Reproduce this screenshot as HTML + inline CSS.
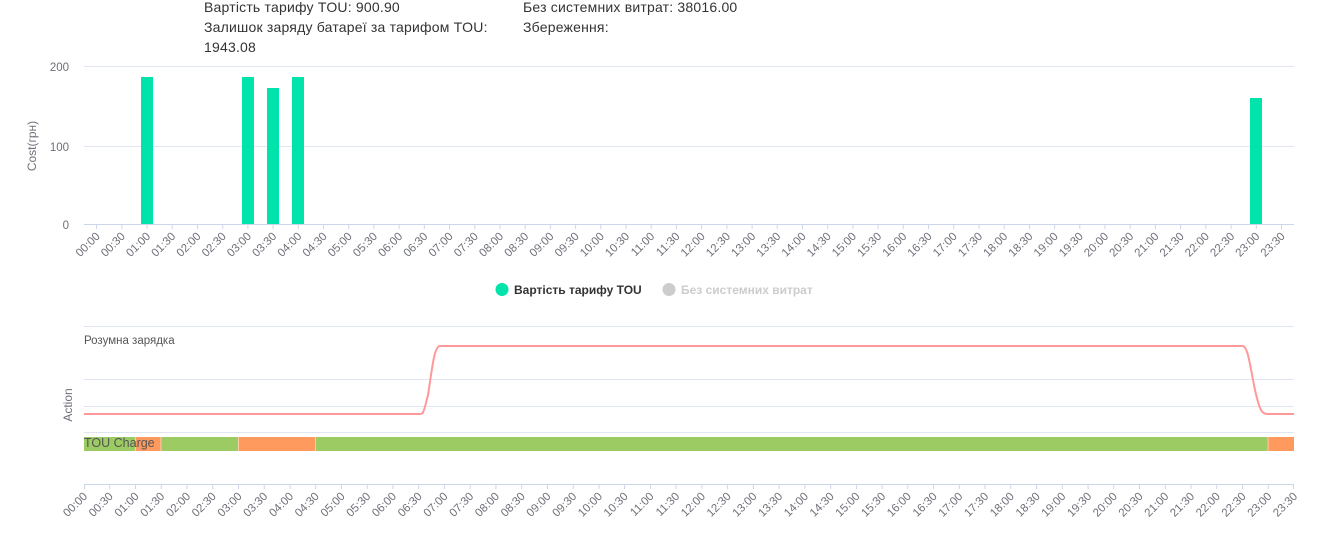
<!DOCTYPE html>
<html><head><meta charset="utf-8"><style>
body{margin:0;width:1341px;height:534px;overflow:hidden;background:#fff;font-family:"Liberation Sans","DejaVu Sans",sans-serif;}
.t{position:absolute;font-size:14px;line-height:20px;color:#333;letter-spacing:0.2px;}
svg{position:absolute;left:0;top:0;}
.tl text{font-size:11.5px;fill:#6e7079;text-anchor:end;}
</style></head><body>
<div class="t" style="left:204px;top:-3px;width:300px;">Вартість тарифу TOU: 900.90<br>Залишок заряду батареї за тарифом TOU:<br>1943.08</div>
<div class="t" style="left:523px;top:-3px;">Без системних витрат: 38016.00<br>Збереження:</div>
<svg width="1341" height="534" xmlns="http://www.w3.org/2000/svg">
<g stroke="#e0e6f1" stroke-width="1">
<line x1="84" y1="66.5" x2="1294" y2="66.5"/><line x1="84" y1="146.5" x2="1294" y2="146.5"/>
<line x1="84" y1="326.5" x2="1294" y2="326.5"/><line x1="84" y1="379.5" x2="1294" y2="379.5"/><line x1="84" y1="406.5" x2="1294" y2="406.5"/><line x1="84" y1="432.5" x2="1294" y2="432.5"/>
</g>
<g font-size="11.5" fill="#6e7079" text-anchor="end">
<text x="69" y="71">200</text><text x="69" y="151">100</text><text x="69" y="229">0</text>
</g>
<text transform="translate(36,146) rotate(-90)" font-size="12" fill="#6e7079" text-anchor="middle">Cost(грн)</text>
<text transform="translate(72,405) rotate(-90)" font-size="12" fill="#6e7079" text-anchor="middle">Action</text>
<g fill="#00e4ac">
<rect x="141" y="77" width="12" height="147"/><rect x="242" y="77" width="12" height="147"/><rect x="267" y="88" width="12" height="136"/><rect x="292" y="77" width="12" height="147"/><rect x="1250" y="98" width="12" height="126"/>
</g>
<line x1="84" y1="224.5" x2="1294" y2="224.5" stroke="#ccd6eb"/>
<g stroke="#ccd6eb">
<path d="M96.6 224v5M121.8 224v5M147 224v5M172.2 224v5M197.4 224v5M222.7 224v5M247.9 224v5M273.1 224v5M298.3 224v5M323.5 224v5M348.7 224v5M373.9 224v5M399.1 224v5M424.3 224v5M449.5 224v5M474.8 224v5M500 224v5M525.2 224v5M550.4 224v5M575.6 224v5M600.8 224v5M626 224v5M651.2 224v5M676.4 224v5M701.6 224v5M726.9 224v5M752.1 224v5M777.3 224v5M802.5 224v5M827.7 224v5M852.9 224v5M878.1 224v5M903.3 224v5M928.5 224v5M953.7 224v5M979 224v5M1004.2 224v5M1029.4 224v5M1054.6 224v5M1079.8 224v5M1105 224v5M1130.2 224v5M1155.4 224v5M1180.6 224v5M1205.8 224v5M1231.1 224v5M1256.3 224v5M1281.5 224v5"/>
</g>
<g class="tl">
<text transform="translate(100.6,237) rotate(-45)">00:00</text><text transform="translate(125.8,237) rotate(-45)">00:30</text><text transform="translate(151,237) rotate(-45)">01:00</text><text transform="translate(176.2,237) rotate(-45)">01:30</text><text transform="translate(201.4,237) rotate(-45)">02:00</text><text transform="translate(226.7,237) rotate(-45)">02:30</text><text transform="translate(251.9,237) rotate(-45)">03:00</text><text transform="translate(277.1,237) rotate(-45)">03:30</text><text transform="translate(302.3,237) rotate(-45)">04:00</text><text transform="translate(327.5,237) rotate(-45)">04:30</text><text transform="translate(352.7,237) rotate(-45)">05:00</text><text transform="translate(377.9,237) rotate(-45)">05:30</text><text transform="translate(403.1,237) rotate(-45)">06:00</text><text transform="translate(428.3,237) rotate(-45)">06:30</text><text transform="translate(453.5,237) rotate(-45)">07:00</text><text transform="translate(478.8,237) rotate(-45)">07:30</text><text transform="translate(504,237) rotate(-45)">08:00</text><text transform="translate(529.2,237) rotate(-45)">08:30</text><text transform="translate(554.4,237) rotate(-45)">09:00</text><text transform="translate(579.6,237) rotate(-45)">09:30</text><text transform="translate(604.8,237) rotate(-45)">10:00</text><text transform="translate(630,237) rotate(-45)">10:30</text><text transform="translate(655.2,237) rotate(-45)">11:00</text><text transform="translate(680.4,237) rotate(-45)">11:30</text><text transform="translate(705.6,237) rotate(-45)">12:00</text><text transform="translate(730.9,237) rotate(-45)">12:30</text><text transform="translate(756.1,237) rotate(-45)">13:00</text><text transform="translate(781.3,237) rotate(-45)">13:30</text><text transform="translate(806.5,237) rotate(-45)">14:00</text><text transform="translate(831.7,237) rotate(-45)">14:30</text><text transform="translate(856.9,237) rotate(-45)">15:00</text><text transform="translate(882.1,237) rotate(-45)">15:30</text><text transform="translate(907.3,237) rotate(-45)">16:00</text><text transform="translate(932.5,237) rotate(-45)">16:30</text><text transform="translate(957.7,237) rotate(-45)">17:00</text><text transform="translate(983,237) rotate(-45)">17:30</text><text transform="translate(1008.2,237) rotate(-45)">18:00</text><text transform="translate(1033.4,237) rotate(-45)">18:30</text><text transform="translate(1058.6,237) rotate(-45)">19:00</text><text transform="translate(1083.8,237) rotate(-45)">19:30</text><text transform="translate(1109,237) rotate(-45)">20:00</text><text transform="translate(1134.2,237) rotate(-45)">20:30</text><text transform="translate(1159.4,237) rotate(-45)">21:00</text><text transform="translate(1184.6,237) rotate(-45)">21:30</text><text transform="translate(1209.8,237) rotate(-45)">22:00</text><text transform="translate(1235.1,237) rotate(-45)">22:30</text><text transform="translate(1260.3,237) rotate(-45)">23:00</text><text transform="translate(1285.5,237) rotate(-45)">23:30</text>
</g>
<circle cx="502" cy="289.5" r="6.5" fill="#00e4ac"/>
<text x="514" y="294" font-size="12" font-weight="bold" fill="#333">Вартість тарифу TOU</text>
<circle cx="669" cy="289.5" r="6.5" fill="#ccc"/>
<text x="681" y="294" font-size="12" font-weight="bold" fill="#ccc">Без системних витрат</text>
<text x="84" y="344" font-size="11.5" fill="#555">Розумна зарядка</text>
<path d="M84 414H418.7C424 414 423 414 428 395C432 370 434 346 440 346H1242.5C1248 346 1250 366 1255 390C1260 412 1262 414 1268.3 414H1294" fill="none" stroke="#ff9999" stroke-width="2"/>
<g>
<rect x="84" y="437" width="51" height="14" fill="#9ccb63"/>
<rect x="135.5" y="437" width="25.2" height="14" fill="#ff9a5e"/>
<rect x="161.2" y="437" width="76.8" height="14" fill="#9ccb63"/>
<rect x="238.5" y="437" width="76.7" height="14" fill="#ff9a5e"/>
<rect x="315.7" y="437" width="952.1" height="14" fill="#9ccb63"/>
<rect x="1268.3" y="437" width="25.7" height="14" fill="#ff9a5e"/>
</g>
<text x="84" y="447" font-size="12.5" fill="#555">TOU Charge</text>
<line x1="84" y1="484.5" x2="1294" y2="484.5" stroke="#ccd6eb"/>
<g stroke="#ccd6eb">
<path d="M84.5 484v5M109.7 484v5M135.5 484v5M161.2 484v5M187 484v5M212.7 484v5M238.5 484v5M264.2 484v5M290 484v5M315.7 484v5M341.5 484v5M367.2 484v5M392.9 484v5M418.7 484v5M444.4 484v5M470.2 484v5M495.9 484v5M521.7 484v5M547.4 484v5M573.2 484v5M598.9 484v5M624.6 484v5M650.4 484v5M676.1 484v5M701.9 484v5M727.6 484v5M753.4 484v5M779.1 484v5M804.9 484v5M830.6 484v5M856.4 484v5M882.1 484v5M907.8 484v5M933.6 484v5M959.3 484v5M985.1 484v5M1010.8 484v5M1036.6 484v5M1062.3 484v5M1088.1 484v5M1113.8 484v5M1139.5 484v5M1165.3 484v5M1191 484v5M1216.8 484v5M1242.5 484v5M1268.3 484v5M1293.5 484v5"/>
</g>
<g class="tl">
<text transform="translate(88,497) rotate(-45)">00:00</text><text transform="translate(113.7,497) rotate(-45)">00:30</text><text transform="translate(139.5,497) rotate(-45)">01:00</text><text transform="translate(165.2,497) rotate(-45)">01:30</text><text transform="translate(191,497) rotate(-45)">02:00</text><text transform="translate(216.7,497) rotate(-45)">02:30</text><text transform="translate(242.5,497) rotate(-45)">03:00</text><text transform="translate(268.2,497) rotate(-45)">03:30</text><text transform="translate(294,497) rotate(-45)">04:00</text><text transform="translate(319.7,497) rotate(-45)">04:30</text><text transform="translate(345.5,497) rotate(-45)">05:00</text><text transform="translate(371.2,497) rotate(-45)">05:30</text><text transform="translate(396.9,497) rotate(-45)">06:00</text><text transform="translate(422.7,497) rotate(-45)">06:30</text><text transform="translate(448.4,497) rotate(-45)">07:00</text><text transform="translate(474.2,497) rotate(-45)">07:30</text><text transform="translate(499.9,497) rotate(-45)">08:00</text><text transform="translate(525.7,497) rotate(-45)">08:30</text><text transform="translate(551.4,497) rotate(-45)">09:00</text><text transform="translate(577.2,497) rotate(-45)">09:30</text><text transform="translate(602.9,497) rotate(-45)">10:00</text><text transform="translate(628.6,497) rotate(-45)">10:30</text><text transform="translate(654.4,497) rotate(-45)">11:00</text><text transform="translate(680.1,497) rotate(-45)">11:30</text><text transform="translate(705.9,497) rotate(-45)">12:00</text><text transform="translate(731.6,497) rotate(-45)">12:30</text><text transform="translate(757.4,497) rotate(-45)">13:00</text><text transform="translate(783.1,497) rotate(-45)">13:30</text><text transform="translate(808.9,497) rotate(-45)">14:00</text><text transform="translate(834.6,497) rotate(-45)">14:30</text><text transform="translate(860.4,497) rotate(-45)">15:00</text><text transform="translate(886.1,497) rotate(-45)">15:30</text><text transform="translate(911.8,497) rotate(-45)">16:00</text><text transform="translate(937.6,497) rotate(-45)">16:30</text><text transform="translate(963.3,497) rotate(-45)">17:00</text><text transform="translate(989.1,497) rotate(-45)">17:30</text><text transform="translate(1014.8,497) rotate(-45)">18:00</text><text transform="translate(1040.6,497) rotate(-45)">18:30</text><text transform="translate(1066.3,497) rotate(-45)">19:00</text><text transform="translate(1092.1,497) rotate(-45)">19:30</text><text transform="translate(1117.8,497) rotate(-45)">20:00</text><text transform="translate(1143.5,497) rotate(-45)">20:30</text><text transform="translate(1169.3,497) rotate(-45)">21:00</text><text transform="translate(1195,497) rotate(-45)">21:30</text><text transform="translate(1220.8,497) rotate(-45)">22:00</text><text transform="translate(1246.5,497) rotate(-45)">22:30</text><text transform="translate(1272.3,497) rotate(-45)">23:00</text><text transform="translate(1298,497) rotate(-45)">23:30</text>
</g>
</svg>
</body></html>
